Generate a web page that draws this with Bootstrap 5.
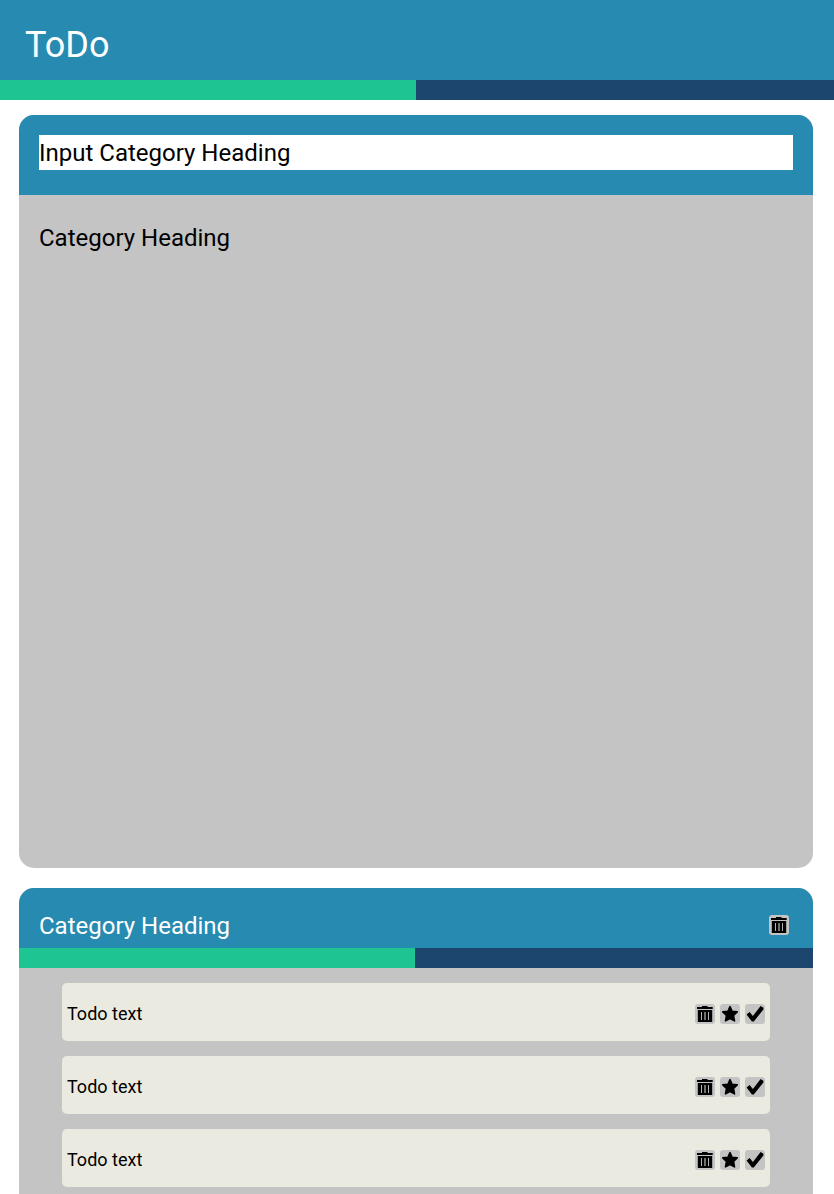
<!DOCTYPE html>
<html lang="en">
<head>
<meta charset="utf-8">
<meta name="viewport" content="width=device-width, initial-scale=1">
<title>ToDo</title>
<link rel="stylesheet" href="https://cdn.jsdelivr.net/npm/bootstrap@5.3.0/dist/css/bootstrap.min.css">
<style>
  body { font-family: Roboto, sans-serif; color: #000; }
  .bg-brand { background: #278ab0; }
  .top-bar { height: 80px; padding: 9px 25px 0; font-size: 36px; }
  .progress.meter { height: 20px; border-radius: 0; background: #1d466f; }
  .meter .progress-bar { background: #1ec592; }
  .board { padding: 15px 21px 0 19px; gap: 20px; }
  .panel { border: 0; border-radius: 15px; background: #c4c4c4; overflow: hidden; font-size: 24px; color: #000; }
  .panel-new { height: 753px; }
  .panel-new .panel-head { height: 80px; padding: 20px 20px 0; }
  .heading-input { height: 35px; padding: 1px 0 0; border: 0; border-radius: 0; font-size: 24px; color: #000; line-height: 34px; }
  .heading-input::placeholder { color: #000; opacity: 1; }
  .heading-preview { padding: 25px 20px; line-height: 36px; }
  .panel-list { height: 306px; border-radius: 15px 15px 0 0; }
  .panel-list .panel-head { height: 60px; padding: 15px 24px 0 20px; }
  .panel-head .icon-btn { margin-bottom: 2px; }
  .todo-list { padding: 15px 43px 0; gap: 15px; }
  .todo { height: 58px; padding: 3px 5px 0; border: 0; border-radius: 5px; background: #eaeae0; font-size: 18px; color: #000; }
  .todo-actions { gap: 5px; }
  .icon-btn { width: 20px; height: 20px; padding: 0; border: 0; border-radius: 3px; background: #c4c4c4; display: block; line-height: 0; color: #000; }
</style>
</head>
<body class="bg-white">
<svg width="0" height="0" class="position-absolute" aria-hidden="true">
  <symbol id="trash" viewBox="0 0 20 20">
    <path d="M2 3h5V2h5.5v1h5.2v2H2z"/>
    <path d="M2.8 6h14.4v12H2.8z"/>
    <path fill="#b4b4b4" d="M6 8h1v8H6zM13 8h1v8h-1z"/>
    <path fill="#707070" d="M9 8h2v8H9z"/>
  </symbol>
  <symbol id="star" viewBox="0 0 20 20">
    <path stroke="#000" stroke-width="1.6" stroke-linejoin="round" d="M10 2.7l2.1 4.6 5.1.6-3.7 3.6 1 5.4-4.5-2.4-4.5 2.4 1-5.4-3.7-3.6 5.1-.6z"/>
  </symbol>
  <symbol id="check" viewBox="0 0 20 20">
    <path d="M1.6 10.6l3-2.6 3.3 3.9L15.6 2l2.8 1.7v1.7L8.8 17.6H6.9z"/>
  </symbol>
</svg>

<header>
  <div class="top-bar bg-brand text-white d-flex align-items-center lh-1">ToDo</div>
  <div class="progress meter"><div class="progress-bar" style="width:49.88%"></div></div>
</header>

<main class="board d-flex flex-column">
  <section class="card panel panel-new">
    <div class="panel-head bg-brand">
      <input class="form-control heading-input shadow-none" type="text" placeholder="Input Category Heading">
    </div>
    <div class="heading-preview">Category Heading</div>
  </section>

  <section class="card panel panel-list">
    <div class="panel-head bg-brand text-white d-flex align-items-center justify-content-between">
      <span>Category Heading</span>
      <button class="btn icon-btn" aria-label="Delete category"><svg width="20" height="20"><use href="#trash"/></svg></button>
    </div>
    <div class="progress meter"><div class="progress-bar" style="width:49.87%"></div></div>
    <ul class="todo-list list-unstyled d-flex flex-column mb-0">
      <li class="todo d-flex align-items-center justify-content-between">
        <span>Todo text</span>
        <div class="todo-actions d-flex">
          <button class="btn icon-btn" aria-label="Delete"><svg width="20" height="20"><use href="#trash"/></svg></button>
          <button class="btn icon-btn" aria-label="Star"><svg width="20" height="20"><use href="#star"/></svg></button>
          <button class="btn icon-btn" aria-label="Done"><svg width="20" height="20"><use href="#check"/></svg></button>
        </div>
      </li>
      <li class="todo d-flex align-items-center justify-content-between">
        <span>Todo text</span>
        <div class="todo-actions d-flex">
          <button class="btn icon-btn" aria-label="Delete"><svg width="20" height="20"><use href="#trash"/></svg></button>
          <button class="btn icon-btn" aria-label="Star"><svg width="20" height="20"><use href="#star"/></svg></button>
          <button class="btn icon-btn" aria-label="Done"><svg width="20" height="20"><use href="#check"/></svg></button>
        </div>
      </li>
      <li class="todo d-flex align-items-center justify-content-between">
        <span>Todo text</span>
        <div class="todo-actions d-flex">
          <button class="btn icon-btn" aria-label="Delete"><svg width="20" height="20"><use href="#trash"/></svg></button>
          <button class="btn icon-btn" aria-label="Star"><svg width="20" height="20"><use href="#star"/></svg></button>
          <button class="btn icon-btn" aria-label="Done"><svg width="20" height="20"><use href="#check"/></svg></button>
        </div>
      </li>
    </ul>
  </section>
</main>
<script src="https://cdn.jsdelivr.net/npm/bootstrap@5.3.0/dist/js/bootstrap.bundle.min.js"></script>
</body>
</html>
